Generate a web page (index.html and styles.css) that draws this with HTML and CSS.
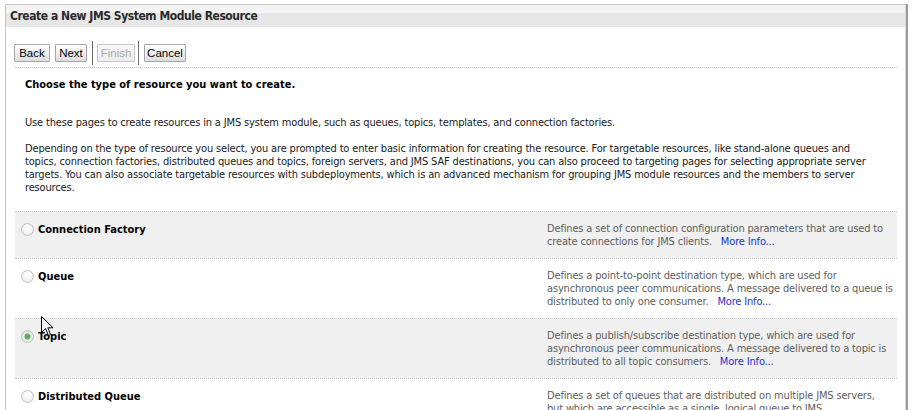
FILE: index.html
```html
<!DOCTYPE html>
<html>
<head>
<meta charset="utf-8">
<link rel="stylesheet" href="styles.css">
</head>
<body>
<div class="panel">
  <div class="title">Create a New JMS System Module Resource</div>
  <div class="inner">
    <div class="toolbar">
      <button class="btn b-back">Back</button>
      <button class="btn b-next">Next</button>
      <span class="sep s1"></span>
      <button class="btn b-finish disabled">Finish</button>
      <span class="sep s2"></span>
      <button class="btn b-cancel">Cancel</button>
    </div>
    <div class="content">
      <h2 class="heading">Choose the type of resource you want to create.</h2>
      <p class="intro">Use these pages to create resources in a JMS system module, such as queues, topics, templates, and connection factories.</p>
      <p class="para">Depending on the type of resource you select, you are prompted to enter basic information for creating the resource. For targetable resources, like stand-alone queues and topics, connection factories, distributed queues and topics, foreign servers, and JMS SAF destinations, you can also proceed to targeting pages for selecting appropriate server targets. You can also associate targetable resources with subdeployments, which is an advanced mechanism for grouping JMS module resources and the members to server resources.</p>
    </div>
    <div class="options">
      <div class="row alt">
        <label class="opt"><span class="radio"></span><span class="name">Connection Factory</span></label>
        <div class="desc">Defines a set of connection configuration parameters that are used to create connections for JMS clients. <a class="more">More Info...</a></div>
      </div>
      <div class="row">
        <label class="opt"><span class="radio"></span><span class="name">Queue</span></label>
        <div class="desc">Defines a point-to-point destination type, which are used for asynchronous peer communications. A message delivered to a queue is distributed to only one consumer. <a class="more">More Info...</a></div>
      </div>
      <div class="row alt">
        <label class="opt"><span class="radio checked"></span><span class="name">Topic</span></label>
        <div class="desc">Defines a publish/subscribe destination type, which are used for asynchronous peer communications. A message delivered to a topic is distributed to all topic consumers. <a class="more">More Info...</a></div>
      </div>
      <div class="row">
        <label class="opt"><span class="radio"></span><span class="name">Distributed Queue</span></label>
        <div class="desc">Defines a set of queues that are distributed on multiple JMS servers, but which are accessible as a single, logical queue to JMS<br>clients. <a class="more">More Info...</a></div>
      </div>
    </div>
  </div>
</div>
<svg class="cursor" width="13" height="21" viewBox="0 0 13 21"><path d="M0.5 0.5 L0.5 16.5 L4.5 12.5 L7.5 19.5 L9.5 18.5 L6.8 11.8 L12 11.8 Z" fill="#fff" stroke="#000" stroke-width="1"/></svg>
</body>
</html>
```

FILE: styles.css
```css
html, body {
  margin: 0;
  padding: 0;
  background: #fff;
  overflow: hidden;
}
body {
  font-family: "DejaVu Sans Condensed", "DejaVu Sans", sans-serif;
  font-size: 11px;
  letter-spacing: -0.16px;
  color: #1a1a1a;
  position: relative;
  height: 410px;
}
.panel {
  margin: 4px 0 0 5px;
  width: 899px;
  height: 420px;
  border: 1px solid #c6c6c6;
  border-right: 1px solid #d6d6d6;
  box-shadow: 2px 0 0 #9c9c9c;
}
.title {
  height: 22px;
  line-height: 22px;
  padding-left: 4px;
  background: linear-gradient(#f3f3f3 0, #f3f3f3 8px, #e7e7e7 8px, #e7e7e7 100%);
  font-weight: bold;
  font-size: 12px;
  letter-spacing: -0.45px;
  color: #2a2a2a;
}
.inner {
  padding: 0 8px 0 9px;
}
.toolbar {
  display: flex;
  align-items: center;
  padding-top: 11px;
  border-bottom: 1px dotted #bdbdbd;
  box-sizing: border-box;
  height: 41px;
}
.btn {
  font-family: "Liberation Sans", Arial, sans-serif;
  font-size: 11.5px;
  letter-spacing: 0;
  height: 18px;
  padding: 0;
  text-align: center;
  border: 1px solid #a6a6a6;
  border-radius: 1px;
  background: linear-gradient(#ffffff, #ececec 60%, #dcdcdc);
  color: #000;
  line-height: 16px;
}
.b-back { width: 36px; margin: 0 5px 0 -1px; }
.b-next { width: 32px; margin: 0 5px 0 0; }
.b-finish { width: 38px; margin: 0 3px 0 0; }
.b-cancel { width: 42px; margin: 0; }
.btn.disabled {
  color: #a8a8a8;
  border-color: #c8c8c8;
  background: linear-gradient(#f8f8f8, #ececec);
}
.sep {
  width: 1px;
  height: 24px;
  background: #6a6a6a;
}
.s1 { margin: 0 4px 0 0; }
.s2 { margin: 0 5px 0 0; }
.content {
  padding: 0 25px 0 10px;
}
.heading {
  margin: 10px 0 0;
  font-size: 11px;
  font-weight: bold;
  letter-spacing: 0;
  line-height: 13px;
  color: #000;
}
.intro {
  margin: 25px 0 0;
  line-height: 13px;
}
.para {
  margin: 13px 0 0;
  line-height: 13px;
}
.options {
  margin-top: 17px;
}
.row {
  display: grid;
  grid-template-columns: 526px 346px;
  border-top: 1px dotted #c4c4c4;
  padding: 10px 0 10px 6px;
  line-height: 13px;
}
.row.alt {
  background: #f0f0f0;
}
.opt {
  display: flex;
  align-items: center;
  gap: 4px;
  height: 13px;
  margin-top: 1px;
}
.radio {
  width: 11px;
  height: 11px;
  border-radius: 50%;
  border: 1px solid #c2c2c2;
  background: radial-gradient(circle at 50% 40%, #ffffff 0, #f4f4f4 50%, #e2e2e2 100%);
  box-sizing: content-box;
  flex: none;
}
.radio.checked {
  background: radial-gradient(circle, #5aa35a 0, #6cb46c 35%, #e8efe8 45%, #dcdcdc 100%);
}
.name {
  font-weight: bold;
  letter-spacing: 0;
  color: #000;
}
.desc {
  color: #5e5e5e;
}
.more {
  color: #2233cc;
  margin-left: 6px;
  text-decoration: none;
}
.cursor {
  position: absolute;
  left: 41px;
  top: 316px;
}
```
